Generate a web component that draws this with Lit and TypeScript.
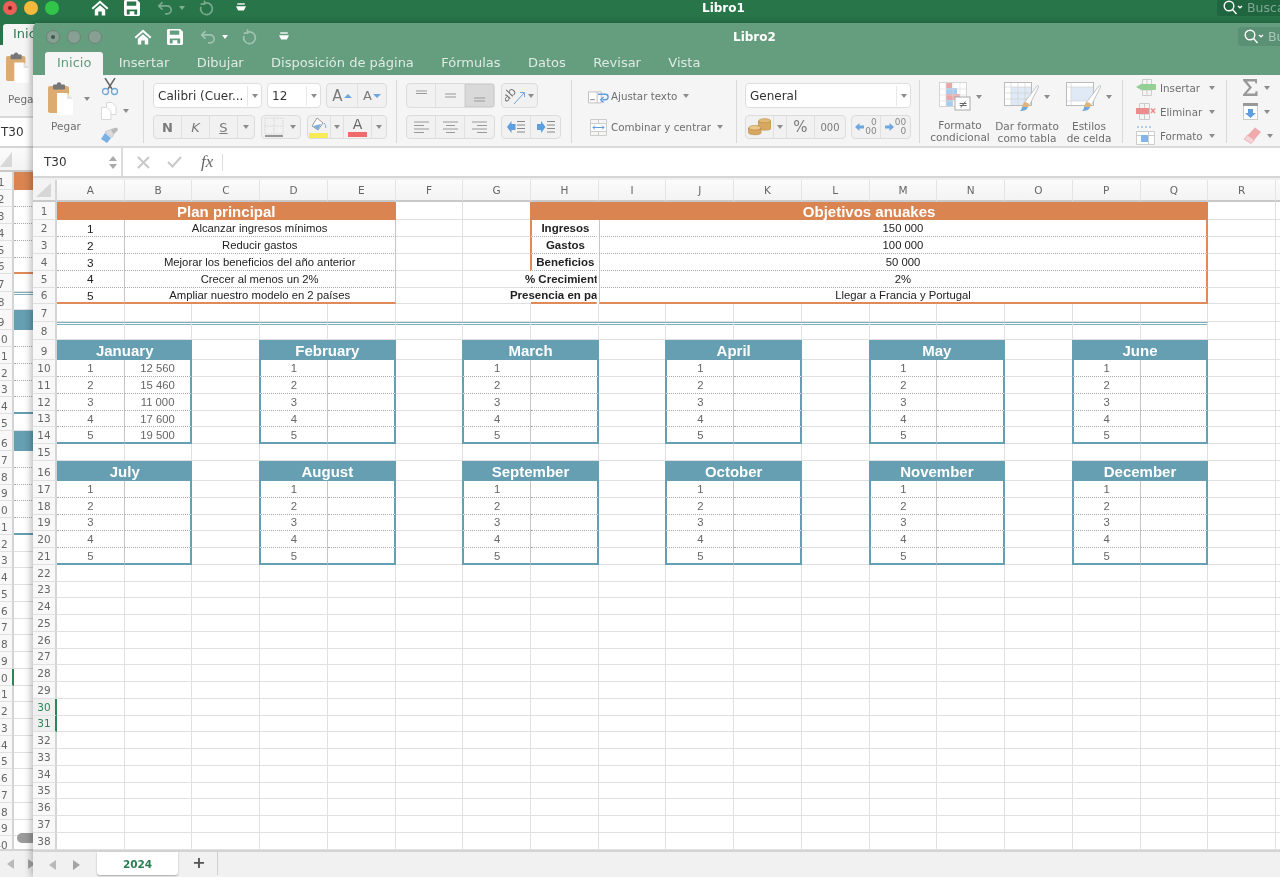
import { LitElement, html, svg, css, TemplateResult } from "lit";
import { customElement } from "lit/decorators.js";

const ROWS = [18, 17, 17, 17, 16.7, 16.8, 17.2, 18.3, 20, 17, 17, 16.7, 16.8, 16.8, 16.7, 20, 16.8, 16.8, 16.8, 16.8, 16.8];
for (let i = 0; i < 20; i++) ROWS.push(16.76);
const MONTHS = ["January", "February", "March", "April", "May", "June", "July", "August", "September", "October", "November", "December"];
const JAN = ["12 560", "15 460", "11 000", "17 600", "19 500"];
const COLS = "ABCDEFGHIJKLMNOPQR".split("");

interface Cell { text?: string; span: number; cls: string; }

function buildCells(): Map<string, Cell | null> {
  const m = new Map<string, Cell | null>();
  const add = (r: number, c: number, span: number, text: string, cls: string) => {
    m.set(`${r}:${c}`, { text, span, cls });
    for (let i = 1; i < span; i++) m.set(`${r}:${c + i}`, null);
  };
  add(1, 1, 5, "Plan principal", "oh s5");
  const plan = ["Alcanzar ingresos mínimos", "Reducir gastos", "Mejorar los beneficios del año anterior", "Crecer al menos un 2%", "Ampliar nuestro modelo en 2 países"];
  plan.forEach((t, i) => {
    const last = i === 4 ? "ob" : "dot";
    add(i + 2, 1, 1, String(i + 1), `tx num vg ${last}`);
    add(i + 2, 2, 4, t, `tx s4 vg ${last}`);
  });
  add(1, 8, 10, "Objetivos anuakes", "oh s10 ofs");
  const goals: [string, string][] = [["Ingresos", "150 000"], ["Gastos", "100 000"], ["Beneficios", "50 000"], ["% Crecimiento", "2%"], ["Presencia en países", "Llegar a Francia y Portugal"]];
  goals.forEach(([k, v], i) => {
    const last = i === 4 ? "ob" : "dot";
    add(i + 2, 8, 1, k, `tx bold clip ${last} ${i < 3 ? "ol ofs" : ""}`);
    add(i + 2, 9, 9, v, `tx s9 or il ${last}`);
    if (i >= 3) add(i + 2, 7, 1, "", "nr");
  });
  for (let c = 1; c <= 17; c++) add(8, c, 1, "", "dbl");
  MONTHS.forEach((name, i) => {
    const base = i < 6 ? 9 : 16;
    const s = (i % 6) * 3 + 1;
    add(base, s, 2, name, `th s2 ${s > 1 ? "ofs" : ""}`);
    for (let k = 1; k <= 5; k++) {
      const line = k === 5 ? "mb" : "dot";
      const left = s > 1 ? "tl ofs" : "";
      add(base + k, s, 1, String(k), `tx gr vg ${line} ${left}`);
      add(base + k, s + 1, 1, i === 0 ? JAN[k - 1] : "", `tx gr tr ${line}`);
    }
  });
  return m;
}
const CELLS = buildCells();

const car = html`<i class="car"></i>`;
const home = html`<svg width="18" height="16" viewBox="0 0 22 20" fill="#fff"><path d="M11 .5 .5 10l1.600 1.800L11 4l8.900 7.800L21.500 10z"/><path d="M4.500 12.200 11 6.500l6.500 5.700V19.500H13.200v-5H8.800v5H4.500z"/></svg>`;
const save = html`<svg width="16" height="16" viewBox="0 0 17 17" fill="#fff"><path fill-rule="evenodd" d="M1.500 0H14l3 3v12.500a1.500 1.500 0 0 1-1.500 1.500h-14A1.500 1.500 0 0 1 0 15.500v-14A1.500 1.500 0 0 1 1.500 0zM3 1.500V6h10V1.500zM3 10v5.500h3V12h5v3.500h3V10z"/></svg>`;
const undo = html`<svg width="17" height="14" viewBox="0 0 20 16" fill="none" stroke="#fff" stroke-opacity=".38" stroke-width="2"><path d="M6.500 1 2 5.500 6.500 10M2 5.500h10a4.700 4.700 0 0 1 0 9.400H9.500"/></svg>`;
const redo = html`<svg width="16" height="16" viewBox="0 0 19 18" fill="none" stroke="#fff" stroke-opacity=".38" stroke-width="2"><path d="M6 3.500a7 7 0 1 1-3.700 4M6.500 0v4.500H2"/></svg>`;
const menu = html`<svg width="10" height="9" viewBox="0 0 12 10" fill="#fff"><rect x="1.500" width="9" height="1.600"/><path d="M0 3.500h12L9.500 8.500h-7z"/></svg>`;
const glass = html`<svg width="20" height="15" viewBox="0 0 20 15" fill="none" stroke="#fff" stroke-width="1.400"><circle cx="6" cy="6" r="4.800"/><path d="m9.500 9.500 4 4.500M15 6l2 1.800L19 6"/></svg>`;

const pasteIcon = (w = 26, h = 33) => html`<svg width="${w}" height="${h}" viewBox="0 0 26 33"><rect y="4" width="21" height="27" rx="2" fill="#dcab72"/><rect x="5" y="2.500" width="12" height="5" rx="1" fill="#777"/><circle cx="11" cy="2.500" r="2.300" fill="#777"/><path d="M9 11h10l6 6v16H9z" fill="#fff"/><path d="M19 11v6h6z" fill="#e4e4e4"/></svg>`;
const cut = html`<svg width="18" height="18" viewBox="0 0 18 18" fill="none"><path d="m4 0 7 11M14 0 7 11" stroke="#666" stroke-width="1.500"/><circle cx="4.500" cy="13.500" r="3" stroke="#6ea6de" stroke-width="1.300"/><circle cx="13.500" cy="13.500" r="3" stroke="#6ea6de" stroke-width="1.300"/></svg>`;
const copy = html`<svg width="16" height="18" viewBox="0 0 16 18" fill="#fff" stroke="#d8d8d8"><path d="M5.500.5H11l4 4v8H5.500z"/><path d="M.5 5.500H6l4 4v8H.5z"/></svg>`;
const brush = html`<svg width="18" height="17" viewBox="0 0 18 17"><path d="M10 2 16 .5 17 3 12 8z" fill="#b9b9b9"/><path d="M9.500 2.500 13 7l-2 3.500L4 5z" fill="#ddd" stroke="#aaa" stroke-width=".5"/><path d="M4 6 10 11 6 16 0 12z" fill="#79b0e3"/></svg>`;
const borders = html`<svg width="20" height="20" viewBox="0 0 20 20" fill="none"><path d="M1 1h18v16H1zM10 1v16M1 9h18" stroke="#d6d6d6" stroke-dasharray="1.500 1"/><path d="M1 19h18" stroke="#777" stroke-width="1.500"/></svg>`;
const bucket = html`<svg width="20" height="21" viewBox="0 0 20 21"><path d="m8 1 6 5-5 7-6-4z" fill="#fff" stroke="#999"/><path d="m4 9 8-2-3 6z" fill="#7aaede"/><path d="M15 6c2 2 2 4 1.500 5" stroke="#7aaede" fill="none"/><rect y="16" width="19" height="5" fill="#f6ea57"/></svg>`;
const lines = (ys: number[], xs: [number, number][], c = "#999") => html`<svg width="17" height="17" viewBox="0 0 17 17" fill="none" stroke="${c}">${ys.map((y, i) => svg`<path d="M${xs[i % xs.length][0]} ${y}H${xs[i % xs.length][1]}"></path>`)}</svg>`;
const orient = html`<svg width="22" height="20" viewBox="0 0 22 20"><text transform="rotate(-45 7 11)" x="-1" y="11" font-family="DejaVu Sans" font-size="12" fill="#777">ab</text><path d="M9 18 19 7M15 6.500h4.500v4.500" fill="none" stroke="#6ea6de" stroke-width="1"/></svg>`;
const indent = (right: boolean) => html`<svg width="18" height="14" viewBox="0 0 18 14"><path d="${right ? "M0 4h4V1l4.500 6L4 13v-3H0z" : "M8.500 4h-4V1L0 7l4.500 6v-3h4z"}" fill="#5d9ede"/><path d="M10 1.500h8M10 5h8M10 8.500h8M10 12h8" stroke="#888"/></svg>`;
const wrap = html`<svg width="21" height="15" viewBox="0 0 23 15" fill="none"><path d="M.5 2.500h14v12H.5zM10 2.500v12" stroke="#bbb" fill="#fff"/><path d="M2.500 11h5" stroke="#777"/><path d="M11 5h8a2.500 2.500 0 0 1 0 6h-3" stroke="#5d9ede" stroke-width="1.500"/><path d="m17 8-3 3 3 3" stroke="#5d9ede" stroke-width="1.500"/></svg>`;
const merge = html`<svg width="17" height="17" viewBox="0 0 17 17" fill="none"><path d="M.5.500h16v16H.5zM.5 4.500H16.500M.5 12.500H16.500M8.500.5v4M8.500 12.500v4" stroke="#ccc"/><rect x="1" y="5" width="15" height="7" fill="#fff"/><path d="M3 8.500h11M5 6.500l-2 2 2 2M12 6.500l2 2-2 2" stroke="#5d9ede"/></svg>`;
const coins = html`<svg width="23" height="18" viewBox="0 0 22 17"><ellipse cx="16" cy="3" rx="6" ry="2.500" fill="#e2b974" stroke="#b58b47" stroke-width=".6"/><path d="M10 3v7c0 2 12 2 12 0V3c0 2-12 2-12 0z" fill="#d9a860" stroke="#b58b47" stroke-width=".6"/><ellipse cx="6.500" cy="9.500" rx="6" ry="2.500" fill="#e9c88a" stroke="#b58b47" stroke-width=".6"/><path d="M.5 9.500v4.500c0 2.500 12 2.500 12 0V9.500c0 2.500-12 2.500-12 0z" fill="#d9a860" stroke="#b58b47" stroke-width=".6"/></svg>`;
const arrowL = html`<svg width="9" height="8" viewBox="0 0 9 8"><path d="M9 2.500H4.500V0L0 4l4.500 4V5.500H9z" fill="#6ea6de"/></svg>`;
const arrowR = html`<svg width="9" height="8" viewBox="0 0 9 8"><path d="M0 2.500h4.500V0L9 4 4.500 8V5.500H0z" fill="#6ea6de"/></svg>`;
const condIcon = html`<svg width="32" height="29" viewBox="0 0 32 29"><rect x=".5" y=".5" width="27" height="24" fill="#fff" stroke="#d5d5d5"/><rect x="7" y="1" width="6" height="6" fill="#eaa5a9"/><rect x="7" y="6" width="11" height="6" fill="#a5ccee"/><rect x="7" y="12" width="14" height="6" fill="#eaa5a9"/><rect x="7" y="18" width="7" height="6" fill="#a5ccee"/><path d="M7 1v24M14 1v24M21 1v24M1 7h26M1 13h26M1 19h26" stroke="#dcdcdc" stroke-width=".6"/><rect x="16" y="15" width="15" height="13" fill="#fff" stroke="#aaa"/><text x="19.500" y="25.500" font-family="DejaVu Sans" font-size="11" fill="#666">≠</text></svg>`;
const brushOver = svg`<path d="M20 21 33 4c1-1 2 0 1.500 1L25 24z" fill="#fff" stroke="#aaa" stroke-width=".7"/><path d="M19.500 21c2-1.500 5-.5 5.500 2 0 .5-.5 1.500-1 2h-6z" fill="#e0b478"/><path d="M18 25h6c-1 3-4 4-8 4 1-1 2-2 2-4z" fill="#6ea6de"/>`;
const tableIcon = html`<svg width="35" height="30" viewBox="0 0 35 30"><rect x=".5" y=".5" width="27" height="23" fill="#fff" stroke="#bbb"/><rect x="7" y="5" width="20" height="18" fill="#dfeaf6"/><path d="M7 1v22M14 1v22M21 1v22M1 5h26M1 11h26M1 17h26" stroke="#ccc" stroke-width=".6"/>${brushOver}</svg>`;
const styleIcon = html`<svg width="35" height="30" viewBox="0 0 35 30"><rect x=".5" y=".5" width="27" height="23" fill="#fff" stroke="#bbb"/><rect x="5" y="5" width="22" height="14" fill="#dfeaf6"/><path d="M1 5h26M5 1v22M1 19h26" stroke="#ccc" stroke-width=".6"/>${brushOver}</svg>`;
const insIcon = html`<svg width="20" height="17" viewBox="0 0 20 17" fill="none"><path d="M6.500.5h9v16h-9zM6.500 5.500h9M6.500 11h9M11 .5v16" stroke="#ccc"/><rect x="6" y="5" width="14" height="6" rx="1" fill="#94d094"/><path d="M6 4.500V11.500L0 8z" fill="#94d094"/></svg>`;
const delIcon = html`<svg width="20" height="17" viewBox="0 0 20 17" fill="none"><path d="M3.500.5h10v16h-10zM3.500 11h10M8.500.5v16" stroke="#ccc"/><rect y="5" width="13" height="6" fill="#ec8d8d"/><path d="m15 5.500 4 4.500M19 5.500 15 10" stroke="#ec8d8d" stroke-width="1.500"/></svg>`;
const fmtIcon = html`<svg width="20" height="19" viewBox="0 0 20 19" fill="none"><path d="M1 1h16" stroke="#6ea6de" stroke-dasharray="2 2"/><path d="M.5 5.500h18v13H.5zM12.500 5.500v13M.5 9.500h18" stroke="#ccc" fill="#fff"/><rect x="5" y="9" width="7" height="7" fill="#84b5e6"/></svg>`;
const sigma = html`<svg width="15" height="17" viewBox="0 0 15 17"><path d="M0 0h14v4.500h-1.500L12 2.500H4l5 6-5.500 6H12l.7-2.200H14.500V17H0v-1.500L6 8.500 0 1.500z" fill="#999"/></svg>`;
const fillDown = html`<svg width="15" height="17" viewBox="0 0 15 17"><rect x=".5" y=".5" width="14" height="16" fill="#fff" stroke="#ccc"/><rect y="0" width="15" height="3" fill="#999"/><path d="M5 6h5v4h3l-5.500 5L2 10h3z" fill="#5d9ede"/></svg>`;
const eraser = html`<svg width="18" height="17" viewBox="0 0 18 17"><path d="M12 .5 18 5 8 16.500 1 12z" fill="#f0a9ad"/><path d="M1 12 4.500 8l7 5-3.500 3.500z" fill="#f7d3d5" stroke="#e39ba0" stroke-width=".5"/></svg>`;
const xIcon = html`<svg width="13" height="13" viewBox="0 0 13 13" stroke="#c8c8c8" stroke-width="2" fill="none"><path d="m1 1 11 11M12 1 1 12"/></svg>`;
const checkIcon = html`<svg width="15" height="12" viewBox="0 0 15 12" stroke="#c8c8c8" stroke-width="2" fill="none"><path d="m1 6 4.500 4.500L14 1"/></svg>`;

@customElement("app-root")
export class AppRoot extends LitElement {
  static styles = css`
    :host { display: block; width: 1280px; height: 877px; overflow: hidden; position: relative; font-family: "DejaVu Sans", sans-serif; background: #f4f4f4; }
    * { box-sizing: border-box; }
    .soft { filter: blur(.4px); width: 1280px; height: 877px; position: relative; overflow: hidden; }

    .win { display: flex; flex-direction: column; width: 1280px; height: 877px; background: #f5f5f5; }
    .front { position: absolute; left: 33px; top: 23px; height: 854px; border-radius: 5px 0 0 0; overflow: hidden; box-shadow: -2px 0 7px rgba(0,0,0,.28); }

    .head { flex: none; }
    .back .head { background: #287549; height: 45px; }
    .front .head { background: #659e7e; height: 52px; }
    .bar { display: flex; align-items: center; height: 15px; padding-left: 3px; }
    .front .bar { margin-top: 6px; padding-left: 13px; }
    .lights { display: flex; gap: 7px; }
    .lights i { width: 14px; height: 14px; border-radius: 50%; display: flex; align-items: center; justify-content: center; }
    .back .l1 { background: #ee5f57; } .back .l2 { background: #f6b93b; } .back .l3 { background: #31c54a; }
    .l1::after { content: ""; width: 4px; height: 4px; border-radius: 50%; background: #7a1f1b; }
    .front .lights i { background: #87a093; border: 1px solid #6c8578; }
    .front .l1::after { background: #3f5a4b; }
    .qat { display: flex; align-items: center; margin-left: 32px; }
    .qa-save { margin-left: 15px; display: flex; } .qa-undo { margin-left: 17px; display: flex; }
    .qa-cr { margin-left: 5px; width: 0; height: 0; border: 3px solid transparent; border-top: 4px solid rgba(255,255,255,.42); border-bottom: 0; }
    .front .qa-cr { border-top-color: #fff; }
    .qa-redo { margin-left: 14px; display: flex; } .qa-menu { margin-left: 21px; display: flex; }
    .title { color: #fff; font-weight: 700; font-size: 12px; white-space: nowrap; }
    .back .title { margin-left: 456px; }
    .front .title { margin-left: 444px; }
    .search { margin-left: auto; display: flex; align-items: center; gap: 4px; height: 17px; padding-left: 6px; width: 63px; flex: none; border-radius: 3px 0 0 3px; background: #1f6640; color: #7fa892; font-size: 12.500px; overflow: hidden; white-space: nowrap; }
    .search svg { flex: none; }
    .front .search { background: #5a9073; height: 19px; width: 75px; color: #a9c8b7; }
    .tabs { display: flex; align-items: flex-end; height: 23px; margin-top: 8px; padding-left: 12px; }
    .back .tabs { padding: 0; }
    .tab { color: #dfeae3; font-size: 13px; padding: 0 13.700px; height: 23px; line-height: 22px; white-space: nowrap; }
    .tab.on { background: #f5f5f5; color: #629b7b; border-radius: 3px 3px 0 0; padding: 0 12px; margin-right: 2px; width: 58px; }
    .backtab { background: #f5f5f5; color: #2e7d52; font-size: 13px; height: 22px; line-height: 20px; margin: 0 0 0 3px; padding-left: 10px; border-radius: 3px 3px 0 0; width: 60px; }

    .ribbon { flex: none; height: 73px; display: flex; background: #f5f5f5; border-bottom: 2px solid #dadada; color: #6e6e6e; font-size: 10.300px; }
    .backrib { display: block; padding: 7px 0 0 6px; }
    .backpeg { padding-left: 2px; margin-top: 8px; white-space: nowrap; font-size: 10.500px; }
    .grp { height: 63px; margin-top: 5px; padding-top: 3px; border-right: 1px solid #d9d9d9; display: flex; flex-direction: column; gap: 7px; flex: none; }
    .grp > .row { flex: none; }
    .g1 { width: 111px; flex-direction: row; padding-left: 15px; gap: 0; }
    .g2 { width: 253px; padding-left: 9px; }
    .g3 { width: 175px; padding-left: 9px; }
    .g4 { width: 165px; padding-left: 14px; gap: 7px; padding-top: 4px; }
    .g5 { width: 183px; padding-left: 8px; }
    .g6 { width: 203px; padding-left: 9px; flex-direction: row; gap: 0; padding-top: 2px; }
    .g7 { width: 104px; padding-left: 13px; gap: 3px; padding-top: 0; }
    .g8 { width: 60px; padding-left: 16px; gap: 5px; padding-top: 0; border: 0; }
    .row { display: flex; align-items: center; gap: 5px; }
    .r1 { height: 25px; } .r2 { height: 24px; }
    .car { display: inline-block; width: 0; height: 0; flex: none; border: 3px solid transparent; border-top: 4px solid #8c8c8c; border-bottom: 0; }
    .sel { display: flex; align-items: center; height: 25px; border: 1px solid #dedede; border-radius: 4px; background: #fff; color: #333; font-size: 12px; padding-left: 4px; white-space: nowrap; }
    .sel span { flex: 1; overflow: hidden; }
    .sel .end { flex: none; width: 14px; height: 20px; display: flex; align-items: center; justify-content: center; border-left: 1px solid #e8e8e8; }
    .w-font { width: 109px; } .w-size { width: 54px; } .w-gen { width: 166px; }
    .bg { display: flex; height: 100%; border: 1px solid #dcdcdc; border-radius: 4px; background: #f1f1f1; flex: none; }
    .b { display: flex; align-items: center; justify-content: center; gap: 1px; border-right: 1px solid #e0e0e0; color: #7a7a7a; flex: none; }
    .b:last-child { border-right: 0; }
    .nb { border-right: 0; }
    .b.act { background: #d9d9d9; box-shadow: inset 0 0 0 1px #cfcfcf; }
    .w13 { width: 13px; } .w14 { width: 14px; } .w16 { width: 16px; } .w23 { width: 23px; } .w24 { width: 24px; } .w28 { width: 28px; } .w29 { width: 29px; } .w30 { width: 30px; } .w31 { width: 31px; } .w35 { width: 35px; }
    .big { font-size: 15px; } .sm { font-size: 13px; }
    .pct { font-size: 15px; } .mil { font-size: 10px; }
    .up { width: 0; height: 0; border: 4px solid transparent; border-bottom: 4px solid #6ea6de; border-top: 0; }
    .dn { width: 0; height: 0; border: 4px solid transparent; border-top: 4px solid #6ea6de; border-bottom: 0; }
    .n { font-weight: 700; font-size: 13px; } .k { font-style: italic; font-size: 13px; } .s { text-decoration: underline; font-size: 13px; }
    .gap6 { gap: 6px; }
    .fontc { display: flex; flex-direction: column; align-items: stretch; width: 19px; line-height: 13px; text-align: center; font-size: 14px; color: #666; }
    .fontc i { height: 5px; background: #ef6a6a; margin-top: 1px; }
    .dec { font-size: 9px; line-height: 9px; color: #888; display: flex; flex-direction: column; align-items: flex-end; }
    .decrow { display: flex; align-items: center; gap: 1px; }
    .paste { width: 36px; display: flex; flex-direction: column; align-items: center; gap: 5px; margin-top: -1px; font-size: 10.500px; }
    .paste svg { align-self: flex-start; }
    .pcar { margin: 14px 0 0 0; }
    .tools { margin-left: 11px; display: flex; flex-direction: column; gap: 6px; margin-top: -5px; }
    .tools .row { gap: 6px; height: 18px; flex: none; }
    .lab { white-space: nowrap; }
    .wt { width: 25px; display: flex; justify-content: center; }
    .g4 .row { gap: 0; } .g4 .lab { margin: 0 6px 0 0; }
    .fmt { display: flex; flex-direction: column; align-items: center; text-align: center; line-height: 12px; font-size: 10.500px; }
    .fmt .ic { display: flex; align-items: center; gap: 5px; height: 33px; margin-bottom: 8px; }
    .f1 { width: 62px; } .f2 { width: 72px; } .f3 { width: 52px; }
    .g7 .row { height: 21px; gap: 4px; } .g7 .ii { width: 20px; display: flex; }
    .g7 .row:first-child { margin-top: -3px; }
    .g7 .lab { width: 45px; }
    .g8 .row { height: 19px; gap: 6px; }
    .g8 .row:first-child { margin-top: -2px; }

    .fbar { flex: none; height: 30px; display: flex; align-items: center; background: #fff; border-bottom: 2px solid #d6d6d6; }
    .name { width: 90px; height: 100%; border-right: 2px solid #dcdcdc; display: flex; align-items: center; justify-content: space-between; padding: 0 4px 0 11px; font-size: 12px; color: #333; }
    .spin { display: flex; flex-direction: column; gap: 3px; }
    .spin i { width: 0; height: 0; border: 4px solid transparent; }
    .spin .a { border-bottom: 5px solid #aaa; border-top: 0; } .spin .z { border-top: 5px solid #aaa; border-bottom: 0; }
    .fx { display: flex; align-items: center; height: 100%; padding-left: 14px; gap: 17px; }
    .fxt { font-family: "Liberation Serif", serif; font-style: italic; font-size: 17px; color: #666; padding-right: 9px; border-right: 1px solid #dcdcdc; margin-left: 2px; height: 17px; line-height: 16px; }
    .backbar { flex: none; height: 30px; background: #fff; border-bottom: 2px solid #d6d6d6; color: #333; font-size: 12px; line-height: 28px; padding-left: 1px; }

    .sheet { flex: 1; min-height: 0; overflow: hidden; background: #fff; }
    .front .sheet { border-top: 2px solid #f0f0f0; }
    .grid { display: grid; grid-template-columns: 24px repeat(18, 67.720px) 200px; }
    .grid.bk { grid-template-columns: 24px 67.720px 67.720px; margin-left: -10px; }
    .cell { display: flex; align-items: center; justify-content: center; border-right: 1px solid #e0e0e0; border-bottom: 1px solid #e0e0e0; min-width: 0; white-space: nowrap; color: #222; background: #fff; font-family: "Liberation Sans", sans-serif; font-size: 11.300px; }
    .ch { height: 22px; background: linear-gradient(#fbfbfb, #f3f3f3); border-right: 1px solid #e4e4e4; border-bottom: 2px solid #c9c9c9; color: #666; font-family: "DejaVu Sans", sans-serif; font-size: 10.500px; }
    .backch { justify-content: flex-start; height: 24px; flex: none; }
    .corner { background: #f3f3f3; border-right: 2px solid #d6d6d6; }
    .corner svg { display: block; }
    .rh { background: #f8f8f8; border-right: 2px solid #d4d4d4; color: #666; font-family: "DejaVu Sans", sans-serif; font-size: 10.500px; align-items: flex-end; line-height: 13px; padding-bottom: 1px; }
    .bk .rh { padding-bottom: 0; }
    .rh.sel2 { color: #2b8557; border-right-color: #2b8557; background: #efefef; }
    .s2 { grid-column: span 2; } .s4 { grid-column: span 4; } .s5 { grid-column: span 5; } .s9 { grid-column: span 9; } .s10 { grid-column: span 10; }
    .oh { background: #d98451; color: #fff; font-weight: 700; font-size: 15px; border: 0; }
    .th { background: #659fb1; color: #fff; font-weight: 700; font-size: 15px; border: 0; padding-top: 1px; }
    .ofs { margin-left: -1px; }
    .vg { border-right-color: #c6c6c6; }
    .num { font-size: 11.800px; padding-top: 1px; }
    .dot { border-bottom: 1px dotted #aaa; }
    .ob { border-bottom: 2px solid #df8a58; }
    .ol { border-left: 2px solid #df8a58; }
    .or { border-right: 2px solid #df8a58; }
    .il { border-left: 1px solid #c6c6c6; }
    .tl { border-left: 2px solid #659fb1; }
    .tr { border-right: 2px solid #659fb1; }
    .mb { border-bottom: 2px solid #659fb1; }
    .gr { color: #666; }
    .bold { font-weight: 700; color: #222; font-size: 11.500px; border-right: 0; }
    .clip { clip-path: inset(0 2px -2px -200px); background: transparent; }
    .nr { border-right: 0; }
    .dbl { border-top: 3px double #7eb0c0; }
    .fill-o { background: #d98451; border: 0; }
    .fill-t { background: #659fb1; border: 0; }
    .bo { border-bottom: 2px solid #df8a58; }
    .bt { border-bottom: 2px solid #659fb1; }
    .rh.mark { border-right: 2px solid #2b8557; }

    .foot { flex: none; height: 28px; display: flex; align-items: flex-start; background: #f1f1f1; border-top: 2px solid #d4d4d4; }
    .front .foot { height: 27px; }
    .nav { width: 14px; display: flex; justify-content: center; margin-top: 8px; }
    .nav i { width: 0; height: 0; border: 5.500px solid transparent; }
    .nav i.nl { border-right: 7px solid #b9b9b9; border-left: 0; }
    .nav i.nr2 { border-left: 7px solid #a4a4a4; border-right: 0; }
    .m3 { margin-left: 3px; } .m7 { margin-left: 7px; } .m10 { margin-left: 10px; } .m12 { margin-left: 12px; }
    .sheettab { width: 81px; height: 23px; margin-left: 14px; background: #fff; border-radius: 0 0 3px 3px; box-shadow: 0 1px 2px rgba(0,0,0,.3); color: #2b7d52; font-weight: 700; font-size: 10.500px; display: flex; align-items: center; justify-content: center; }
    .plus { width: 40px; height: 23px; padding-left: 3px; border-right: 1px solid #d0d0d0; font-size: 16px; line-height: 21px; text-align: center; color: #555; font-weight: 700; }
    .pill { position: absolute; left: 17px; top: 833px; width: 20px; height: 10px; border-radius: 5px; background: #9b9b9b; }
  `;

  private titleBar(name: string): TemplateResult {
    return html`<div class="bar">
      <div class="lights"><i class="l1"></i><i class="l2"></i><i class="l3"></i></div>
      <div class="qat">${home}<span class="qa-save">${save}</span><span class="qa-undo">${undo}</span><i class="qa-cr"></i><span class="qa-redo">${redo}</span><span class="qa-menu">${menu}</span></div>
      <div class="title">${name}</div>
      <div class="search">${glass}<span>Buscar</span></div>
    </div>`;
  }

  private ribbon(): TemplateResult {
    return html`<div class="ribbon">
      <div class="grp g1">
        <div class="paste">${pasteIcon()}<span>Pegar</span></div><i class="car pcar"></i>
        <div class="tools"><div class="row">${cut}</div><div class="row">${copy}${car}</div><div class="row">${brush}</div></div>
      </div>
      <div class="grp g2">
        <div class="row r1">
          <div class="sel w-font"><span>Calibri (Cuer...</span><i class="end">${car}</i></div>
          <div class="sel w-size"><span>12</span><i class="end">${car}</i></div>
          <div class="bg"><div class="b w31"><span class="big">A</span><i class="up"></i></div><div class="b w28"><span class="sm">A</span><i class="dn"></i></div></div>
        </div>
        <div class="row r2 gap6">
          <div class="bg"><div class="b w28 n">N</div><div class="b w28 k">K</div><div class="b w28 s">S</div><div class="b w16">${car}</div></div>
          <div class="bg"><div class="b w24 nb">${borders}</div><div class="b w14">${car}</div></div>
          <div class="bg"><div class="b w23">${bucket}</div><div class="b w13">${car}</div><div class="b w28"><div class="fontc">A<i></i></div></div><div class="b w14">${car}</div></div>
        </div>
      </div>
      <div class="grp g3">
        <div class="row r1 gap6">
          <div class="bg"><div class="b w29">${lines([4, 6.5], [[3, 14]])}</div><div class="b w29">${lines([7, 10], [[3, 14]])}</div><div class="b w29 act">${lines([11, 14], [[3, 14]])}</div></div>
          <div class="bg"><div class="b w35">${orient}${car}</div></div>
        </div>
        <div class="row r2 gap6">
          <div class="bg"><div class="b w29">${lines([3, 6.5, 10, 13.5], [[1, 16], [1, 11]])}</div><div class="b w29">${lines([3, 6.5, 10, 13.5], [[1, 16], [4, 13]])}</div><div class="b w29">${lines([3, 6.5, 10, 13.5], [[1, 16], [6, 16]])}</div></div>
          <div class="bg"><div class="b w29">${indent(false)}</div><div class="b w29">${indent(true)}</div></div>
        </div>
      </div>
      <div class="grp g4">
        <div class="row r2"><span class="wt">${wrap}</span><span class="lab">Ajustar texto</span>${car}</div>
        <div class="row r2"><span class="wt">${merge}</span><span class="lab">Combinar y centrar</span>${car}</div>
      </div>
      <div class="grp g5">
        <div class="row r1"><div class="sel w-gen"><span>General</span><i class="end">${car}</i></div></div>
        <div class="row r2">
          <div class="bg"><div class="b w28">${coins}</div><div class="b w13">${car}</div><div class="b w28 pct">%</div><div class="b w30 mil">000</div></div>
          <div class="bg"><div class="b w29"><div class="decrow">${arrowL}<div class="dec"><span>0</span><span>00</span></div></div></div><div class="b w29"><div class="decrow">${arrowR}<div class="dec"><span>00</span><span>0</span></div></div></div></div>
        </div>
      </div>
      <div class="grp g6">
        <div class="fmt f1"><div class="ic">${condIcon}${car}</div>Formato<br />condicional</div>
        <div class="fmt f2"><div class="ic">${tableIcon}${car}</div>Dar formato<br />como tabla</div>
        <div class="fmt f3"><div class="ic">${styleIcon}${car}</div>Estilos<br />de celda</div>
      </div>
      <div class="grp g7">
        <div class="row"><span class="ii">${insIcon}</span><span class="lab">Insertar</span>${car}</div>
        <div class="row"><span class="ii">${delIcon}</span><span class="lab">Eliminar</span>${car}</div>
        <div class="row"><span class="ii">${fmtIcon}</span><span class="lab">Formato</span>${car}</div>
      </div>
      <div class="grp g8">
        <div class="row">${sigma}${car}</div>
        <div class="row">${fillDown}${car}</div>
        <div class="row">${eraser}${car}</div>
      </div>
    </div>`;
  }

  private frontGrid(): TemplateResult {
    const out: TemplateResult[] = [];
    out.push(html`<div class="cell ch corner"><svg width="18" height="16" viewBox="0 0 18 16"><path d="M16 1v14H1z" fill="#d6d6d6"/></svg></div>`);
    COLS.forEach((c) => out.push(html`<div class="cell ch">${c}</div>`));
    out.push(html`<div class="cell ch"></div>`);
    for (let r = 1; r <= 38; r++) {
      out.push(html`<div class="cell rh ${r === 30 || r === 31 ? "sel2" : ""}">${r}</div>`);
      for (let c = 1; c <= 19; c++) {
        const v = CELLS.get(`${r}:${c}`);
        if (v === null) continue;
        out.push(v ? html`<div class="cell ${v.cls}">${v.text}</div>` : html`<div class="cell"></div>`);
      }
    }
    const tpl = ["22px", ...ROWS.slice(0, 38).map((h) => `${h}px`)].join(" ");
    return html`<div class="grid" style="grid-template-rows:${tpl}">${out}</div>`;
  }

  private backGrid(): TemplateResult {
    const out: TemplateResult[] = [];
    const tpl = ROWS.slice(0, 40).map((h) => `${h}px`).join(" ");
    for (let r = 1; r <= 40; r++) {
      let cls = "";
      if (r === 1) cls = "fill-o";
      else if (r === 9 || r === 16) cls = "fill-t";
      else if (r === 6) cls = "bo";
      else if (r === 8) cls = "dbl";
      else if (r === 14 || r === 21) cls = "bt";
      else if ((r >= 2 && r <= 5) || (r >= 10 && r <= 13) || (r >= 17 && r <= 20)) cls = "dot";
      out.push(html`<div class="cell rh ${r === 30 ? "mark" : ""}">${r}</div><div class="cell ${cls}"></div><div class="cell"></div>`);
    }
    return html`<div class="grid bk" style="grid-template-rows:${tpl}">${out}</div>`;
  }

  render() {
    return html`<div class="soft">
      <div class="win back">
        <div class="head">${this.titleBar("Libro1")}<div class="tabs"><div class="backtab">Inicio</div></div></div>
        <div class="ribbon backrib">${pasteIcon(24, 31)}<div class="backpeg">Pegar</div></div>
        <div class="backbar">T30</div>
        <div class="cell ch backch"><svg width="14" height="22" viewBox="0 0 14 22"><path d="M12 4v15H0z" fill="#d8d8d8"/></svg></div>
        <div class="sheet">${this.backGrid()}</div>
        <div class="foot"><div class="nav m3"><i class="nl"></i></div><div class="nav m7"><i class="nr2"></i></div></div>
      </div>
      <div class="pill"></div>
      <div class="win front">
        <div class="head">${this.titleBar("Libro2")}
          <div class="tabs"><div class="tab on">Inicio</div><div class="tab">Insertar</div><div class="tab">Dibujar</div><div class="tab">Disposición de página</div><div class="tab">Fórmulas</div><div class="tab">Datos</div><div class="tab">Revisar</div><div class="tab">Vista</div></div>
        </div>
        ${this.ribbon()}
        <div class="fbar"><div class="name">T30<span class="spin"><i class="a"></i><i class="z"></i></span></div><div class="fx">${xIcon}${checkIcon}<span class="fxt">fx</span></div></div>
        <div class="sheet">${this.frontGrid()}</div>
        <div class="foot">
          <div class="nav m12"><i class="nl"></i></div><div class="nav m10"><i class="nr2"></i></div>
          <div class="sheettab">2024</div><div class="plus">+</div>
        </div>
      </div>
    </div>`;
  }
}
